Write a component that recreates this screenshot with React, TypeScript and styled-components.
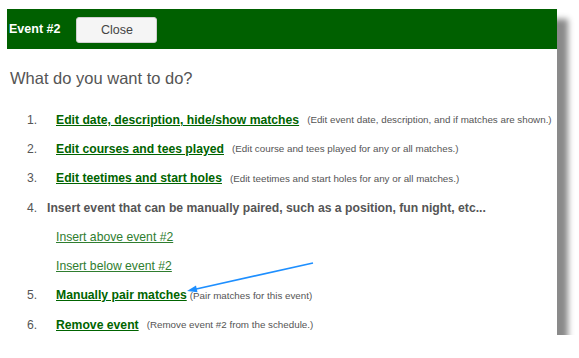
import styled, { createGlobalStyle } from 'styled-components'

const GlobalStyle = createGlobalStyle`
  body {
    margin: 0;
    background: #ffffff;
    font-family: "Liberation Sans", Arial, sans-serif;
  }
`;

const Page = styled.div`
  padding: 9px 0 0 7px;
`;

const Panel = styled.div`
  position: relative;
  width: 550px;
  height: 326px;
  background: #ffffff;
  box-shadow: 11px 10px 6px #8a8a8a;
`;

const Header = styled.div`
  height: 40px;
  background: #006000;
  display: flex;
  align-items: center;
  padding-left: 2px;
  gap: 16px;
`;

const Title = styled.span`
  color: #ffffff;
  font-weight: bold;
  font-size: 12.5px;
`;

const CloseButton = styled.button`
  width: 81px;
  height: 26px;
  margin-top: 2px;
  background: #f5f5f5;
  border: 1px solid #d0d0d0;
  border-radius: 3px;
  color: #444;
  font-family: "Liberation Sans", Arial, sans-serif;
  font-size: 12.5px;
`;

const Question = styled.div`
  box-sizing: border-box;
  font-size: 16.5px;
  color: #555;
  padding: 20px 0 0 3px;
  height: 40px;
`;

const List = styled.div`
  display: flex;
  flex-direction: column;
  padding-top: 16px;
`;

const Row = styled.div<{ $indent?: number }>`
  height: 29.3px;
  display: flex;
  align-items: center;
  white-space: nowrap;
  padding-left: ${p => p.$indent ?? 20}px;
`;

const Num = styled.span<{ $w?: number }>`
  width: ${p => p.$w ?? 29}px;
  font-size: 12.2px;
  color: #555;
`;

const MainLink = styled.a<{ $gap?: number }>`
  font-size: 12.2px;
  font-weight: bold;
  color: #006400;
  text-decoration: underline;
  margin-right: ${p => p.$gap ?? 8}px;
`;

const SubLink = styled.a`
  font-size: 12.2px;
  color: #2f7d2f;
  text-decoration: underline;
`;

const Note = styled.span`
  font-size: 9.8px;
  color: #555;
`;

const Plain = styled.span`
  font-size: 12.2px;
  font-weight: bold;
  color: #555;
`;

const Arrow = styled.svg`
  position: absolute;
  left: 170px;
  top: 241px;
`;

const items = [
  { n: '1.', link: 'Edit date, description, hide/show matches', note: '(Edit event date, description, and if matches are shown.)' },
  { n: '2.', link: 'Edit courses and tees played', note: '(Edit course and tees played for any or all matches.)' },
  { n: '3.', link: 'Edit teetimes and start holes', note: '(Edit teetimes and start holes for any or all matches.)' },
];

export default function App() {
  return (
    <Page>
      <GlobalStyle />
      <Panel>
        <Header>
          <Title>Event #2</Title>
          <CloseButton>Close</CloseButton>
        </Header>
        <Question>What do you want to do?</Question>
        <List>
          {items.map(it => (
            <Row key={it.n}>
              <Num>{it.n}</Num>
              <MainLink>{it.link}</MainLink>
              <Note>{it.note}</Note>
            </Row>
          ))}
          <Row>
            <Num $w={20}>4.</Num>
            <Plain>Insert event that can be manually paired, such as a position, fun night, etc...</Plain>
          </Row>
          <Row $indent={49}>
            <SubLink>Insert above event #2</SubLink>
          </Row>
          <Row $indent={49}>
            <SubLink>Insert below event #2</SubLink>
          </Row>
          <Row>
            <Num>5.</Num>
            <MainLink $gap={3}>Manually pair matches</MainLink>
            <Note>(Pair matches for this event)</Note>
          </Row>
          <Row>
            <Num>6.</Num>
            <MainLink>Remove event</MainLink>
            <Note>(Remove event #2 from the schedule.)</Note>
          </Row>
        </List>
        <Arrow width="150" height="50" viewBox="0 0 150 50">
          <line x1="136" y1="13" x2="17" y2="39.5" stroke="#1e8fff" strokeWidth="1.6" />
          <polygon points="10,41 20.5,42.2 19,35.4" fill="#1e8fff" />
        </Arrow>
      </Panel>
    </Page>
  );
}
